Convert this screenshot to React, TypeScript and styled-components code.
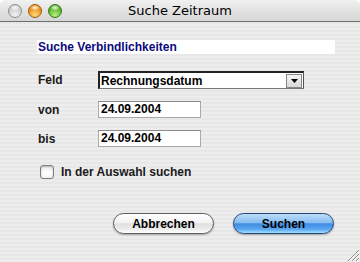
import React from "react";
import styled, { createGlobalStyle } from "styled-components";

const Global = createGlobalStyle`
  html, body { margin: 0; padding: 0; background: #ffffff; }
  body { font-family: "Liberation Sans", Arial, sans-serif; }
`;

const Window = styled.div`
  width: 360px;
  height: 262px;
  display: flex;
  flex-direction: column;
  overflow: hidden;
  border-radius: 6px 6px 0 0;
  background: repeating-linear-gradient(
    to bottom,
    #ededed 0px,
    #ededed 2px,
    #e7e7e7 2px,
    #e7e7e7 4px
  );
`;

const TitleBar = styled.div`
  height: 21px;
  flex: 0 0 21px;
  border-bottom: 1px solid #6e6e6e;
  background: linear-gradient(to bottom, #f1f1f1 0%, #e4e4e4 45%, #d6d6d6 100%);
  display: grid;
  grid-template-columns: 1fr auto 1fr;
  align-items: center;
`;

const Lights = styled.div`
  display: flex;
  gap: 6px;
  padding-left: 8px;
  padding-top: 1px;
`;

const Light = styled.span<{ $c: string; $d: string; $h: string }>`
  width: 14px;
  height: 14px;
  border-radius: 50%;
  box-sizing: border-box;
  border: 1px solid ${(p) => p.$d};
  background:
    radial-gradient(ellipse 5px 3px at 50% 22%, rgba(255,255,255,0.95), rgba(255,255,255,0) 100%),
    radial-gradient(circle at 50% 85%, ${(p) => p.$h} 0%, ${(p) => p.$c} 70%);
`;

const Title = styled.div`
  font-family: "DejaVu Sans", "Liberation Sans", sans-serif;
  font-size: 13px;
  color: #000;
`;

const Content = styled.div`
  flex: 1;
  display: flex;
  flex-direction: column;
  padding: 18px 25px 0 37px;
  position: relative;
`;

const Header = styled.div`
  background: #fff;
  height: 14px;
  width: 298px;
  color: #0c0a7c;
  font-weight: bold;
  font-size: 12px;
  line-height: 14px;
  padding-left: 1px;
  box-sizing: border-box;
`;

const Form = styled.div`
  display: grid;
  grid-template-columns: 61px auto;
  row-gap: 12px;
  margin-top: 17px;
  align-items: center;
  justify-items: start;
`;

const Label = styled.div`
  font-weight: bold;
  font-size: 12px;
  color: #1a1a1a;
  padding-left: 1px;
`;

const Select = styled.div`
  width: 206px;
  height: 18px;
  box-sizing: border-box;
  background: #fff;
  border-top: 2px solid #222;
  border-left: 2px solid #222;
  border-right: 1px solid #555;
  border-bottom: 1px solid #777;
  display: flex;
  align-items: center;
`;

const SelectText = styled.div`
  flex: 1;
  font-weight: bold;
  font-size: 12px;
  color: #000;
  padding-left: 1px;
`;

const Arrow = styled.div`
  width: 16px;
  height: 14px;
  margin-right: 1px;
  background: linear-gradient(#f4f4f4, #d8d8d8);
  border: 1px solid #888;
  box-sizing: border-box;
  display: flex;
  align-items: center;
  justify-content: center;
`;

const Field = styled.div`
  width: 103px;
  height: 17px;
  box-sizing: border-box;
  background: #fff;
  border: 1px solid #aaa;
  border-top-color: #8a8a8a;
  font-weight: bold;
  font-size: 12px;
  line-height: 15px;
  padding-left: 2px;
  color: #000;
`;

const CheckRow = styled.div`
  display: flex;
  align-items: center;
  gap: 7px;
  margin-top: 18px;
  padding-left: 3px;
`;

const Box = styled.span`
  width: 14px;
  height: 14px;
  box-sizing: border-box;
  border-radius: 3px;
  border: 1px solid #7d7d7d;
  background: linear-gradient(#ececec, #ffffff 60%, #f4f4f4);
  box-shadow: inset 0 1px 2px rgba(0,0,0,0.25);
`;

const CheckLabel = styled.span`
  font-weight: bold;
  font-size: 12px;
  color: #1a1a1a;
`;

const Buttons = styled.div`
  display: flex;
  gap: 19px;
  margin-top: 34px;
  padding-left: 76px;
`;

const Button = styled.div<{ $primary?: boolean }>`
  width: 101px;
  height: 21px;
  box-sizing: border-box;
  border-radius: 11px;
  display: flex;
  align-items: center;
  justify-content: center;
  font-weight: bold;
  font-size: 12px;
  color: #000;
  border: 1px solid ${(p) => (p.$primary ? "#27447e" : "#5e5e5e")};
  background: ${(p) =>
    p.$primary
      ? "linear-gradient(to bottom, #bfdcf8 0%, #87bdf1 45%, #3f8be0 52%, #5aa6f0 80%, #a0e0ff 100%)"
      : "linear-gradient(to bottom, #ffffff 0%, #f2f2f2 45%, #e0e0e0 52%, #ececec 80%, #ffffff 100%)"};
  box-shadow: 0 1px 2px rgba(0,0,0,0.3);
`;

const Grip = styled.svg`
  position: absolute;
  right: 0;
  bottom: 0;
`;

export default function App() {
  return (
    <>
      <Global />
      <Window>
        <TitleBar>
          <Lights>
            <Light $c="#c9c9c9" $d="#8d8d8d" $h="#f4f4f4" />
            <Light $c="#e98a0c" $d="#9b5a0a" $h="#ffd97a" />
            <Light $c="#4fae1e" $d="#2f7a12" $h="#b7f08a" />
          </Lights>
          <Title>Suche Zeitraum</Title>
          <div />
        </TitleBar>
        <Content>
          <Header>Suche Verbindlichkeiten</Header>
          <Form>
            <Label>Feld</Label>
            <Select>
              <SelectText>Rechnungsdatum</SelectText>
              <Arrow>
                <svg width="7" height="4" viewBox="0 0 7 4">
                  <path d="M0 0H7L3.5 4Z" fill="#000" />
                </svg>
              </Arrow>
            </Select>
            <Label>von</Label>
            <Field>24.09.2004</Field>
            <Label>bis</Label>
            <Field>24.09.2004</Field>
          </Form>
          <CheckRow>
            <Box />
            <CheckLabel>In der Auswahl suchen</CheckLabel>
          </CheckRow>
          <Buttons>
            <Button>Abbrechen</Button>
            <Button $primary>Suchen</Button>
          </Buttons>
          <Grip width="15" height="15" viewBox="0 0 15 15">
            <path d="M14 3L3 14M14 7L7 14M14 11L11 14" stroke="#8a8a8a" strokeWidth="1" />
            <path d="M14 4L4 14M14 8L8 14M14 12L12 14" stroke="#ffffff" strokeWidth="1" />
          </Grip>
        </Content>
      </Window>
    </>
  );
}
